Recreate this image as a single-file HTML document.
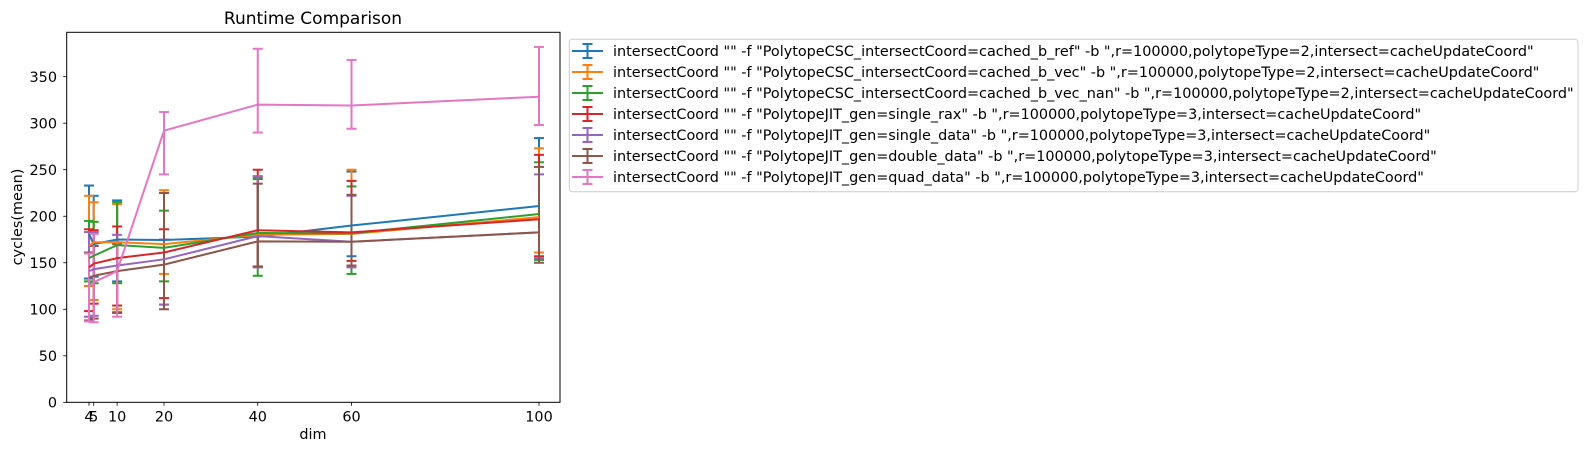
<!DOCTYPE html>
<html><head><meta charset="utf-8">
<style>
html,body{margin:0;padding:0;background:#fff;}
svg{display:block;font-family:"DejaVu Sans","Liberation Sans",sans-serif;}
</style></head>
<body>
<svg id="s" width="1587" height="455" viewBox="0 0 1587 455" xmlns="http://www.w3.org/2000/svg">
<rect width="1587" height="455" fill="#fff"/>
<g id="plot"></g>
<rect x="66.7" y="32.3" width="493.3" height="370" fill="none" stroke="#000" stroke-width="1"/>
<g font-size="14.4" fill="#000">
<text x="313" y="24" font-size="17" text-anchor="middle">Runtime Comparison</text>
<g text-anchor="end">
<text x="57" y="407.3">0</text>
<text x="57" y="360.8">50</text>
<text x="57" y="314.3">100</text>
<text x="57" y="267.8">150</text>
<text x="57" y="221.3">200</text>
<text x="57" y="174.8">250</text>
<text x="57" y="128.3">300</text>
<text x="57" y="81.8">350</text>
</g>
<g text-anchor="middle">
<text x="89" y="421.5">4</text>
<text x="93.7" y="421.5">5</text>
<text x="117.1" y="421.5">10</text>
<text x="164" y="421.5">20</text>
<text x="257.75" y="421.5">40</text>
<text x="351.5" y="421.5">60</text>
<text x="539" y="421.5">100</text>
<text x="313" y="439">dim</text>
<text transform="translate(22,217) rotate(-90)">cycles(mean)</text>
</g>
</g>
<rect x="569.3" y="39.3" width="1008.7" height="152.4" rx="3" fill="#fff" fill-opacity="0.8" stroke="#ccc" stroke-width="1"/>
<g id="leg"></g>
<g font-size="14.4" fill="#000">
<text x="613" y="56">intersectCoord "" -f "PolytopeCSC_intersectCoord=cached_b_ref" -b ",r=100000,polytopeType=2,intersect=cacheUpdateCoord"</text>
<text x="613" y="77">intersectCoord "" -f "PolytopeCSC_intersectCoord=cached_b_vec" -b ",r=100000,polytopeType=2,intersect=cacheUpdateCoord"</text>
<text x="613" y="98">intersectCoord "" -f "PolytopeCSC_intersectCoord=cached_b_vec_nan" -b ",r=100000,polytopeType=2,intersect=cacheUpdateCoord"</text>
<text x="613" y="119">intersectCoord "" -f "PolytopeJIT_gen=single_rax" -b ",r=100000,polytopeType=3,intersect=cacheUpdateCoord"</text>
<text x="613" y="140">intersectCoord "" -f "PolytopeJIT_gen=single_data" -b ",r=100000,polytopeType=3,intersect=cacheUpdateCoord"</text>
<text x="613" y="161">intersectCoord "" -f "PolytopeJIT_gen=double_data" -b ",r=100000,polytopeType=3,intersect=cacheUpdateCoord"</text>
<text x="613" y="182">intersectCoord "" -f "PolytopeJIT_gen=quad_data" -b ",r=100000,polytopeType=3,intersect=cacheUpdateCoord"</text>
</g>
</svg>
<script>
(function(){
var NS="http://www.w3.org/2000/svg";
function X(d){return 89+(d-4)*4.6875;}
function Y(v){return 402.3-0.9303*v;}
var dims=[4,5,10,20,40,60,100];
var cols=["#1f77b4","#ff7f0e","#2ca02c","#d62728","#9467bd","#8c564b","#e377c2"];
var mean=[
[181,170,175,174.5,178,190,211],
[168,172,172,170,180,181,199],
[155,157.5,169,166,182,181.6,202.4],
[145,149,155,161,185,182.7,196.7],
[141,143,147,153.7,178.6,172.6,182.7],
[133.5,136,141,148,173,172.6,182.7],
[125,129,141,292,320,319,328.5]];
var hi=[
[233,222,217,225,240,248,284],
[222,215,213,228,243,250,273],
[195,194,215,206,241,232,258],
[186,185,189,186,250,238,266],
[183,183,180,175,243,222,245],
[161,168,170,225,235,223,253],
[160,181,172,312,380,368,382]];
var lo=[
[133,135,130,105,146,157,161],
[125,110,100,138,146,147,161],
[130,128,128,130,136,138,153],
[98,106,104,112,146,152,157],
[92,93,97,105,145,145,155],
[88,90,96,100,146,147,150],
[87,86,92,245,290,294,298]];
var g=document.getElementById("plot");
function el(n,a,p){var e=document.createElementNS(NS,n);for(var k in a)e.setAttribute(k,a[k]);p.appendChild(e);return e;}
var W=2;
for(var s=0;s<7;s++){
  var c=cols[s];
  for(var i=0;i<7;i++){
    var x=X(dims[i]);
    el("line",{x1:x,x2:x,y1:Y(hi[s][i]),y2:Y(lo[s][i]),stroke:c,"stroke-width":W},g);
    el("line",{x1:x-5,x2:x+5,y1:Y(hi[s][i]),y2:Y(hi[s][i]),stroke:c,"stroke-width":W},g);
    el("line",{x1:x-5,x2:x+5,y1:Y(lo[s][i]),y2:Y(lo[s][i]),stroke:c,"stroke-width":W},g);
  }
}
for(var s=0;s<7;s++){
  var pts=dims.map(function(d,i){return X(d)+","+Y(mean[s][i]);}).join(" ");
  el("polyline",{points:pts,fill:"none",stroke:cols[s],"stroke-width":W},g);
}
for(var v=0;v<=350;v+=50){el("line",{x1:63.2,x2:66.7,y1:Y(v),y2:Y(v),stroke:"#000","stroke-width":0.8},g);}
dims.forEach(function(d){el("line",{x1:X(d),x2:X(d),y1:402.3,y2:405.8,stroke:"#000","stroke-width":0.8},g);});
var lg=document.getElementById("leg");
for(var s=0;s<7;s++){
  var y=51+21*s,c=cols[s];
  el("line",{x1:572,x2:603,y1:y,y2:y,stroke:c,"stroke-width":W},lg);
  el("line",{x1:587.5,x2:587.5,y1:y-7,y2:y+7,stroke:c,"stroke-width":W},lg);
  el("line",{x1:582.5,x2:592.5,y1:y-7,y2:y-7,stroke:c,"stroke-width":W},lg);
  el("line",{x1:582.5,x2:592.5,y1:y+7,y2:y+7,stroke:c,"stroke-width":W},lg);
}
})();
</script>
</body></html>
